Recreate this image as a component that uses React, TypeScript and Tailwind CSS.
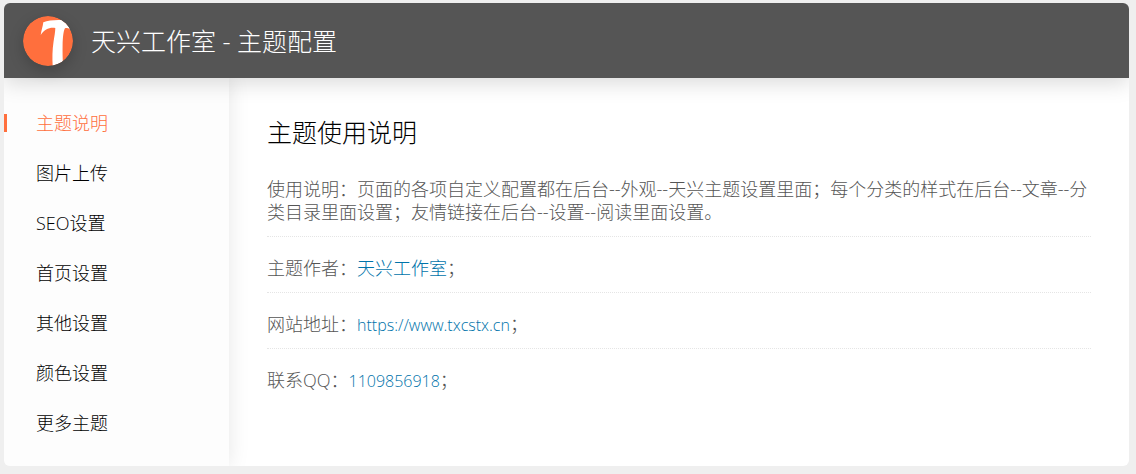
import { useState } from "react";
import clsx from "clsx";

interface NavItemProps {
  label: string;
  active: boolean;
  onSelect: () => void;
}

const navItems = [
  "主题说明",
  "图片上传",
  "SEO设置",
  "首页设置",
  "其他设置",
  "颜色设置",
  "更多主题",
];

const infoRows = [
  { id: "author", label: "主题作者：", text: "天兴工作室", href: "https://www.txcstx.cn", latin: false },
  { id: "site", label: "网站地址：", text: "https://www.txcstx.cn", href: "https://www.txcstx.cn", latin: true },
  { id: "qq", label: "联系QQ：", text: "1109856918", href: "tencent://message/?uin=1109856918", latin: true },
];

const Logo = () => (
  <svg
    viewBox="0 0 50 50"
    className="size-[50px] rounded-full shadow-[0_5px_15px_rgba(0,0,0,0.2)]"
    aria-hidden="true"
  >
    <defs>
      <clipPath id="logo-clip">
        <circle cx="25" cy="25" r="25" />
      </clipPath>
    </defs>
    <g clipPath="url(#logo-clip)">
      <rect width="50" height="50" fill="#ff6f3d" />
      <path
        d="M20.3 6.3 C25 4.600 31 3.700 38 4 L44 4 L50 17 C47.500 13 44.500 11 42 12.300 C40.300 15 39.800 22 39.600 29 C39.500 36 39.600 42 40 50 L29.700 50 C29.200 42 29.300 34 30.500 26 C31.300 20.500 32.300 16 32.300 12 C26.500 11 21.500 13.500 17.700 19 C18.300 14.500 19.800 10.500 20.300 6.300 Z"
        fill="#fff"
      />
    </g>
  </svg>
);

const NavItem = ({ label, active, onSelect }: NavItemProps) => (
  <li>
    <button
      type="button"
      onClick={onSelect}
      className={clsx(
        "flex h-[50px] w-full cursor-pointer items-center text-left text-lg font-light",
        active ? "text-[#ff6f3d]" : "text-black"
      )}
    >
      <span
        className={clsx("mr-[29px] h-[18px] w-[3px]", active && "bg-[#ff6f3d]")}
      />
      {label}
    </button>
  </li>
);

const App = () => {
  const [activeItem, setActiveItem] = useState(navItems[0]);

  return (
    <div className="min-h-screen bg-[#efefef] pt-[3px] pr-[7px] pb-2 pl-1 font-['Open_Sans','Noto_Sans_CJK_SC',sans-serif] font-light">
      <div className="overflow-hidden rounded-md bg-white">
        <header className="relative z-10 flex h-[75px] items-center gap-[18px] bg-[#555] px-[19px] shadow-[0_5px_20px_rgba(0,0,0,0.15)]">
          <Logo />
          <h1 className="pt-0.5 text-[25px] text-white">天兴工作室 - 主题配置</h1>
        </header>
        <div className="flex">
          <nav className="w-[225px] shrink-0 bg-[#fdfdfd] pt-5 pb-[18px] shadow-[0_0_20px_rgba(0,0,0,0.1)]">
            <ul>
              {navItems.map((item) => (
                <NavItem
                  key={item}
                  label={item}
                  active={item === activeItem}
                  onSelect={() => setActiveItem(item)}
                />
              ))}
            </ul>
          </nav>
          <main className="min-w-0 flex-1 px-[38px] pt-9 text-lg leading-[23px] text-[#555]">
            <h2 className="text-[25px] leading-9 text-black">主题使用说明</h2>
            <p className="mt-7 border-b border-dotted border-[#e5e5e5] pb-3">
              使用说明：页面的各项自定义配置都在后台--外观--天兴主题设置里面；每个分类的样式在后台--文章--分类目录里面设置；友情链接在后台--设置--阅读里面设置。
            </p>
            {infoRows.map((row) => (
              <p
                key={row.id}
                className="border-b border-dotted border-[#e5e5e5] pt-5 pb-3 last:border-b-0"
              >
                {row.label}
                <a
                  href={row.href}
                  className={clsx(
                    "text-[#0073aa]",
                    row.latin && "text-base leading-none"
                  )}
                >
                  {row.text}
                </a>
                ；
              </p>
            ))}
          </main>
        </div>
      </div>
    </div>
  );
};

export default App;
